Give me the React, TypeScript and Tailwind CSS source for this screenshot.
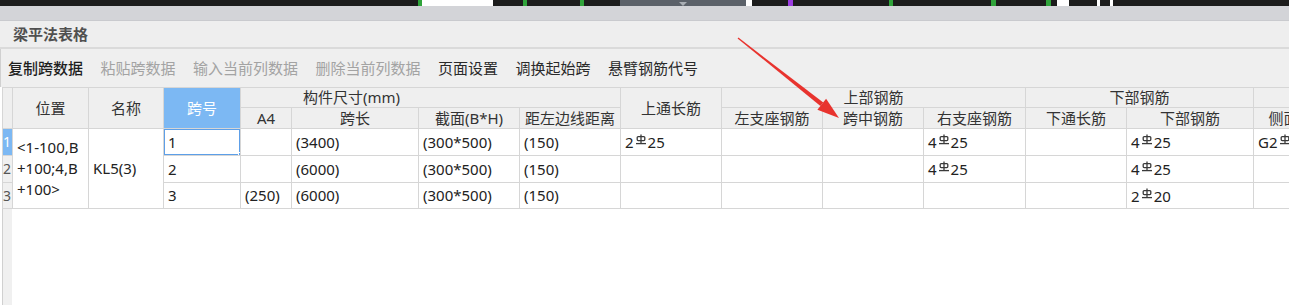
import React from "react";

const bd = "border border-[#d6d6d6]";
const head = `${bd} bg-[#efefef] font-normal text-[#333] text-center p-0 whitespace-nowrap overflow-hidden`;
const cell = `${bd} bg-white px-1 text-left whitespace-nowrap overflow-hidden`;

function Rebar() {
  return (
    <svg viewBox="0 0 12 11" className="mx-[1px] inline-block h-[11px] w-[12px] align-[3px]" fill="none" stroke="#3a3a3a" strokeWidth="1.3">
      <path d="M6 0.5V9" />
      <rect x="2.2" y="2.6" width="7.6" height="4" rx="1" />
      <path d="M1 9.6H11" />
    </svg>
  );
}

function Bar({ n, d }: { n: string; d: string }) {
  return (
    <span>
      {n}
      <Rebar />
      {d}
    </span>
  );
}

function TopStrip() {
  return (
    <div className="flex h-[6px] w-full">
      <div className="w-[418px] bg-[#1c1c1c]" />
      <div className="w-[4px] bg-[#2fa33a]" />
      <div className="w-[71px] bg-white" />
      <div className="w-[30px] bg-[#1c1c1c]" />
      <div className="w-[4px] bg-[#2fa33a]" />
      <div className="w-[53px] bg-[#1c1c1c]" />
      <div className="w-[4px] bg-[#2fa33a]" />
      <div className="w-[36px] bg-[#1c1c1c]" />
      <div className="flex w-[126px] items-end justify-center bg-[#5b6169]">
        <div className="h-0 w-0 border-x-[4px] border-t-[4px] border-x-transparent border-t-[#a9aeb4]" />
      </div>
      <div className="w-[6px] bg-white" />
      <div className="w-[36px] bg-[#1c1c1c]" />
      <div className="w-[5px] bg-[#9b3ce0]" />
      <div className="w-[96px] bg-[#1c1c1c]" />
      <div className="w-[4px] bg-[#2fa33a]" />
      <div className="w-[98px] bg-[#1c1c1c]" />
      <div className="w-[5px] bg-[#2fa33a]" />
      <div className="w-[50px] bg-[#1c1c1c]" />
      <div className="w-[5px] bg-[#2fa33a]" />
      <div className="w-[6px] bg-[#1c1c1c]" />
      <div className="w-[12px] bg-white" />
      <div className="w-[28px] bg-[#1c1c1c]" />
      <div className="w-[3px] bg-white" />
      <div className="w-[10px] bg-[#1c1c1c]" />
      <div className="w-[3px] bg-white" />
      <div className="flex-1 bg-[#1c1c1c]" />
    </div>
  );
}

const tools = [
  { t: "复制跨数据", c: "text-[#1e1e1e] font-medium" },
  { t: "粘贴跨数据", c: "text-[#a3a3a3]" },
  { t: "输入当前列数据", c: "text-[#a3a3a3]" },
  { t: "删除当前列数据", c: "text-[#a3a3a3]" },
  { t: "页面设置", c: "text-[#2a2a2a]" },
  { t: "调换起始跨", c: "text-[#2a2a2a]" },
  { t: "悬臂钢筋代号", c: "text-[#2a2a2a]" },
];

export default function App() {
  return (
    <div className="relative flex h-[305px] w-[1289px] flex-col overflow-hidden bg-white font-['Noto_Sans','Noto_Sans_CJK_SC',sans-serif] text-[15px] leading-none">
      <TopStrip />
      <div className="h-[14px] bg-[#d3d4d8]" />
      <div className="h-[1px] bg-[#c9cace]" />
      <div className="flex h-[26px] items-center bg-[#eeeeee] pl-[13px] font-bold text-[#505050]">梁平法表格</div>
      <div className="h-[2px] bg-[#dadada]" />
      <div className="flex h-[38px] items-center gap-[17.5px] border-l border-[#d0d0d0] bg-[#efefef] pl-[7px]">
        {tools.map((x) => (
          <span key={x.t} className={x.c}>
            {x.t}
          </span>
        ))}
      </div>
      <div className="w-full overflow-hidden pl-[2px]">
        <table className="w-[1356px] table-fixed border-collapse text-[#222]">
          <colgroup>
            <col className="w-[10px]" />
            <col className="w-[76px]" />
            <col className="w-[75px]" />
            <col className="w-[77px]" />
            <col className="w-[51px]" />
            <col className="w-[127px]" />
            <col className="w-[101px]" />
            <col className="w-[101px]" />
            <col className="w-[101px]" />
            <col className="w-[101px]" />
            <col className="w-[101px]" />
            <col className="w-[102px]" />
            <col className="w-[101px]" />
            <col className="w-[127px]" />
            <col className="w-[105px]" />
          </colgroup>
          <thead>
            <tr className="h-[20px]">
              <th rowSpan={2} className={head} />
              <th rowSpan={2} className={head}>位置</th>
              <th rowSpan={2} className={head}>名称</th>
              <th rowSpan={2} className={`${bd} bg-[#7cb8f3] p-0 text-center font-normal text-white`}>跨号</th>
              <th colSpan={4} className={`${head} !text-left pl-[62px]`}>构件尺寸(mm)</th>
              <th rowSpan={2} className={head}>上通长筋</th>
              <th colSpan={3} className={head}>上部钢筋</th>
              <th colSpan={2} className={head}>下部钢筋</th>
              <th className={head} />
            </tr>
            <tr className="h-[21px]">
              <th className={head}>A4</th>
              <th className={head}>跨长</th>
              <th className={head}>截面(B*H)</th>
              <th className={head}>距左边线距离</th>
              <th className={head}>左支座钢筋</th>
              <th className={head}>跨中钢筋</th>
              <th className={head}>右支座钢筋</th>
              <th className={head}>下通长筋</th>
              <th className={head}>下部钢筋</th>
              <th className={head}>侧面通长筋</th>
            </tr>
          </thead>
          <tbody>
            <tr className="h-[27px]">
              <td className={`${bd} bg-[#7cb8f3] p-0 text-[14px] text-white`}>1</td>
              <td rowSpan={3} className={`${bd} bg-white px-1 leading-[21px]`}>
                &lt;1-100,B
                <br />
                +100;4,B
                <br />
                +100&gt;
              </td>
              <td rowSpan={3} className={cell}>KL5(3)</td>
              <td className={`${cell} relative`}>
                1
                <div className="absolute inset-[-1px] border-2 border-[#5d9fe8]" />
                <div className="absolute bottom-[-3px] right-[-4px] h-[6px] w-[6px] border border-white bg-[#5d9fe8]" />
              </td>
              <td className={cell} />
              <td className={cell}>(3400)</td>
              <td className={cell}>(300*500)</td>
              <td className={cell}>(150)</td>
              <td className={cell}><Bar n="2" d="25" /></td>
              <td className={cell} />
              <td className={cell} />
              <td className={cell}><Bar n="4" d="25" /></td>
              <td className={cell} />
              <td className={cell}><Bar n="4" d="25" /></td>
              <td className={cell}><Bar n="G2" d="12" /></td>
            </tr>
            <tr className="h-[27px]">
              <td className={`${bd} bg-[#f0f0f0] p-0 text-[14px] text-[#555]`}>2</td>
              <td className={cell}>2</td>
              <td className={cell} />
              <td className={cell}>(6000)</td>
              <td className={cell}>(300*500)</td>
              <td className={cell}>(150)</td>
              <td className={cell} />
              <td className={cell} />
              <td className={cell} />
              <td className={cell}><Bar n="4" d="25" /></td>
              <td className={cell} />
              <td className={cell}><Bar n="4" d="25" /></td>
              <td className={cell} />
            </tr>
            <tr className="h-[26px]">
              <td className={`${bd} bg-[#f0f0f0] p-0 text-[14px] text-[#555]`}>3</td>
              <td className={cell}>3</td>
              <td className={cell}>(250)</td>
              <td className={cell}>(6000)</td>
              <td className={cell}>(300*500)</td>
              <td className={cell}>(150)</td>
              <td className={cell} />
              <td className={cell} />
              <td className={cell} />
              <td className={cell} />
              <td className={cell} />
              <td className={cell}><Bar n="2" d="20" /></td>
              <td className={cell} />
            </tr>
          </tbody>
        </table>
      </div>
      <div className="flex flex-1 pl-[2px]">
        <div className="w-[10px] border-l border-[#d0d0d0] bg-[#f0f0f0]" />
        <div className="flex-1 bg-white" />
      </div>
      <svg className="pointer-events-none absolute left-0 top-0 h-[305px] w-[1289px]" viewBox="0 0 1289 305">
        <polygon points="737.6,38.4 738.4,37.6 823.3,102.6 820.4,106" fill="#e8332e" />
        <polygon points="839,118 817.4,109.8 826.1,98.8" fill="#e8332e" />
      </svg>
    </div>
  );
}
